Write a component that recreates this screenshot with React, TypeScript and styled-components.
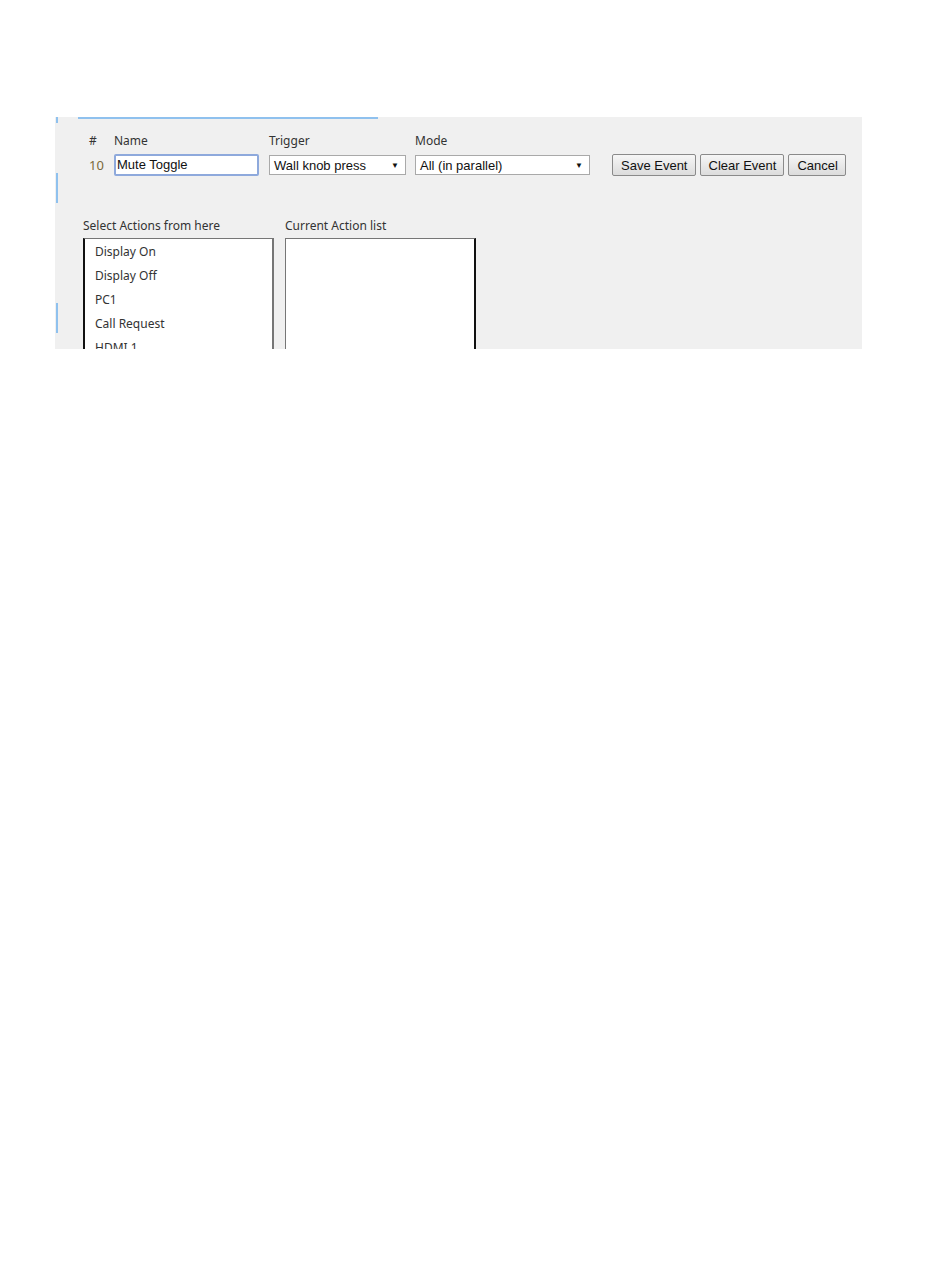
import React from "react";
import styled, { createGlobalStyle } from "styled-components";

const Global = createGlobalStyle`
  html, body { margin: 0; padding: 0; background: #fff; }
  body { width: 950px; height: 1276px; overflow: hidden; }
`;

const Page = styled.div`
  padding: 117px 0 0 55px;
`;

const Panel = styled.div`
  position: relative;
  width: 807px;
  height: 232px;
  background: #f0f0f0;
  overflow: hidden;
  font-family: "Noto Sans", "Open Sans", sans-serif;
  font-size: 12px;
  color: #333;
`;

const TopLine = styled.div`
  position: absolute;
  top: 0;
  left: 23px;
  width: 300px;
  height: 2px;
  background: #8fc1ee;
`;

const SideMark = styled.div<{ $top: number; $h: number }>`
  position: absolute;
  left: 1px;
  top: ${(p) => p.$top}px;
  width: 2px;
  height: ${(p) => p.$h}px;
  background: #8fc1ee;
`;

const Form = styled.div`
  display: grid;
  grid-template-columns: 25px 155px 146px 197px auto;
  grid-template-rows: 18px 22px;
  row-gap: 4px;
  align-items: center;
  padding: 15px 0 0 34px;
`;

const Label = styled.div`
  font-size: 12px;
  color: #333;
  line-height: 18px;
  white-space: nowrap;
`;

const Num = styled.div`
  font-size: 13px;
  color: #7a6a3a;
  font-family: "Noto Sans", sans-serif;
`;

const TextInput = styled.div`
  box-sizing: border-box;
  width: 145px;
  height: 22px;
  border: 2px solid #8ea9dc;
  border-radius: 2px;
  background: #fff;
  font-family: "Liberation Sans", Arial, sans-serif;
  font-size: 13px;
  color: #111;
  padding: 0 0 0 1px;
  line-height: 18px;
  white-space: nowrap;
`;

const Select = styled.div<{ $w: number }>`
  box-sizing: border-box;
  width: ${(p) => p.$w}px;
  height: 20px;
  border: 1px solid #a9a9a9;
  background: #fff;
  display: flex;
  align-items: center;
  justify-content: space-between;
  padding: 0 6px 0 4px;
  font-family: "Liberation Sans", Arial, sans-serif;
  font-size: 13px;
  color: #111;
  white-space: nowrap;
`;

const Arrow = styled.span`
  font-size: 8px;
  color: #111;
`;

const Buttons = styled.div`
  display: flex;
  gap: 4px;
`;

const Button = styled.div`
  box-sizing: border-box;
  height: 22px;
  padding: 0 7px 0 8px;
  border: 1px solid #8a8a8a;
  border-radius: 2px;
  background: linear-gradient(#f6f6f6, #dcdcdc);
  font-family: "Liberation Sans", Arial, sans-serif;
  font-size: 13px;
  color: #111;
  display: flex;
  align-items: center;
  white-space: nowrap;
`;

const Lists = styled.div`
  display: flex;
  gap: 11px;
  padding: 41px 0 0 28px;
`;

const Column = styled.div`
  display: flex;
  flex-direction: column;
  gap: 3px;
`;

const ListBox = styled.div<{ $darkRight?: boolean }>`
  box-sizing: border-box;
  width: 191px;
  height: 160px;
  background: #fff;
  border: 1px solid #767676;
  border-left: ${(p) => (p.$darkRight ? "1px solid #767676" : "2px solid #111")};
  border-right: ${(p) => (p.$darkRight ? "2px solid #111" : "2px solid #767676")};
  padding: 1px 0 0 10px;
`;

const Item = styled.div`
  font-size: 12px;
  line-height: 24px;
  color: #333;
`;

const actions = ["Display On", "Display Off", "PC1", "Call Request", "HDMI 1"];

export default function App() {
  return (
    <Page>
      <Global />
      <Panel>
        <TopLine />
        <SideMark $top={0} $h={6} />
        <SideMark $top={56} $h={30} />
        <SideMark $top={186} $h={30} />
        <Form>
          <Label>#</Label>
          <Label>Name</Label>
          <Label>Trigger</Label>
          <Label>Mode</Label>
          <div />
          <Num>10</Num>
          <TextInput>Mute Toggle</TextInput>
          <Select $w={137}>
            <span>Wall knob press</span>
            <Arrow>▼</Arrow>
          </Select>
          <Select $w={175}>
            <span>All (in parallel)</span>
            <Arrow>▼</Arrow>
          </Select>
          <Buttons>
            <Button>Save Event</Button>
            <Button>Clear Event</Button>
            <Button>Cancel</Button>
          </Buttons>
        </Form>
        <Lists>
          <Column>
            <Label>Select Actions from here</Label>
            <ListBox>
              {actions.map((a) => (
                <Item key={a}>{a}</Item>
              ))}
            </ListBox>
          </Column>
          <Column>
            <Label>Current Action list</Label>
            <ListBox $darkRight />
          </Column>
        </Lists>
      </Panel>
    </Page>
  );
}
